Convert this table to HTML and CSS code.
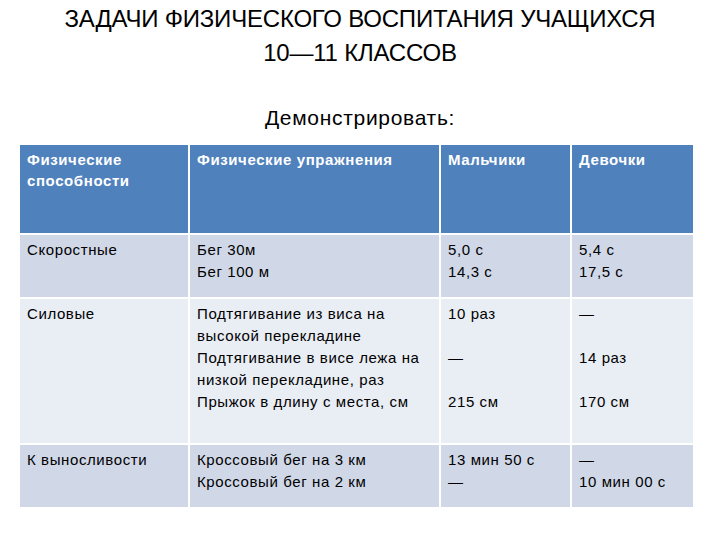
FILE: index.html
```html
<!DOCTYPE html>
<html lang="ru">
<head>
<meta charset="utf-8">
<title>Задачи физического воспитания</title>
<link rel="stylesheet" href="styles.css">
</head>
<body>
<div class="slide">
  <h1 class="title">ЗАДАЧИ ФИЗИЧЕСКОГО ВОСПИТАНИЯ УЧАЩИХСЯ<br>10—11 КЛАССОВ</h1>
  <p class="subtitle">Демонстрировать:</p>
  <div class="grid">
    <div class="cell head">Физические<br>способности</div>
    <div class="cell head">Физические упражнения</div>
    <div class="cell head">Мальчики</div>
    <div class="cell head">Девочки</div>

    <div class="cell dark">Скоростные</div>
    <div class="cell dark">Бег 30м<br>Бег 100 м</div>
    <div class="cell dark">5,0 с<br>14,3 с</div>
    <div class="cell dark">5,4 с<br>17,5 с</div>

    <div class="cell light">Силовые</div>
    <div class="cell light">Подтягивание из виса на<br>высокой перекладине<br>Подтягивание в висе лежа на<br>низкой перекладине, раз<br>Прыжок в длину с места, см</div>
    <div class="cell light">10 раз<br><br>—<br><br>215 см</div>
    <div class="cell light">—<br><br>14 раз<br><br>170 см</div>

    <div class="cell dark">К выносливости</div>
    <div class="cell dark">Кроссовый бег на 3 км<br>Кроссовый бег на 2 км</div>
    <div class="cell dark">13 мин 50 с<br>—</div>
    <div class="cell dark">—<br>10 мин 00 с</div>
  </div>
</div>
</body>
</html>
```
FILE: styles.css
```css
html, body {
  margin: 0;
  padding: 0;
  background: #ffffff;
}
.slide {
  width: 720px;
  height: 540px;
  font-family: "Liberation Sans", Arial, sans-serif;
  color: #000;
}
.title {
  margin: 0;
  padding-top: 2px;
  font-size: 24px;
  line-height: 34px;
  font-weight: normal;
  text-align: center;
  letter-spacing: -0.2px;
}
.subtitle {
  margin: 35px 0 0;
  font-size: 21px;
  line-height: 25px;
  text-align: center;
  letter-spacing: 0.7px;
}
.grid {
  margin: 15px 0 0 20px;
  width: 673px;
  display: grid;
  grid-template-columns: 168px 249px 129px 121px;
  grid-template-rows: 88px 62px 144px 62px;
  gap: 2px;
  background: #ffffff;
}
.cell {
  padding: 4px 7px;
  font-size: 15px;
  line-height: 22px;
  letter-spacing: 0.6px;
  white-space: nowrap;
}
.head {
  background: #4f81bd;
  color: #ffffff;
  font-weight: bold;
  font-size: 15px;
  line-height: 21px;
  padding-top: 4px;
  letter-spacing: 0.6px;
}
.dark {
  background: #d0d8e8;
}
.light {
  background: #e9edf4;
}
```
